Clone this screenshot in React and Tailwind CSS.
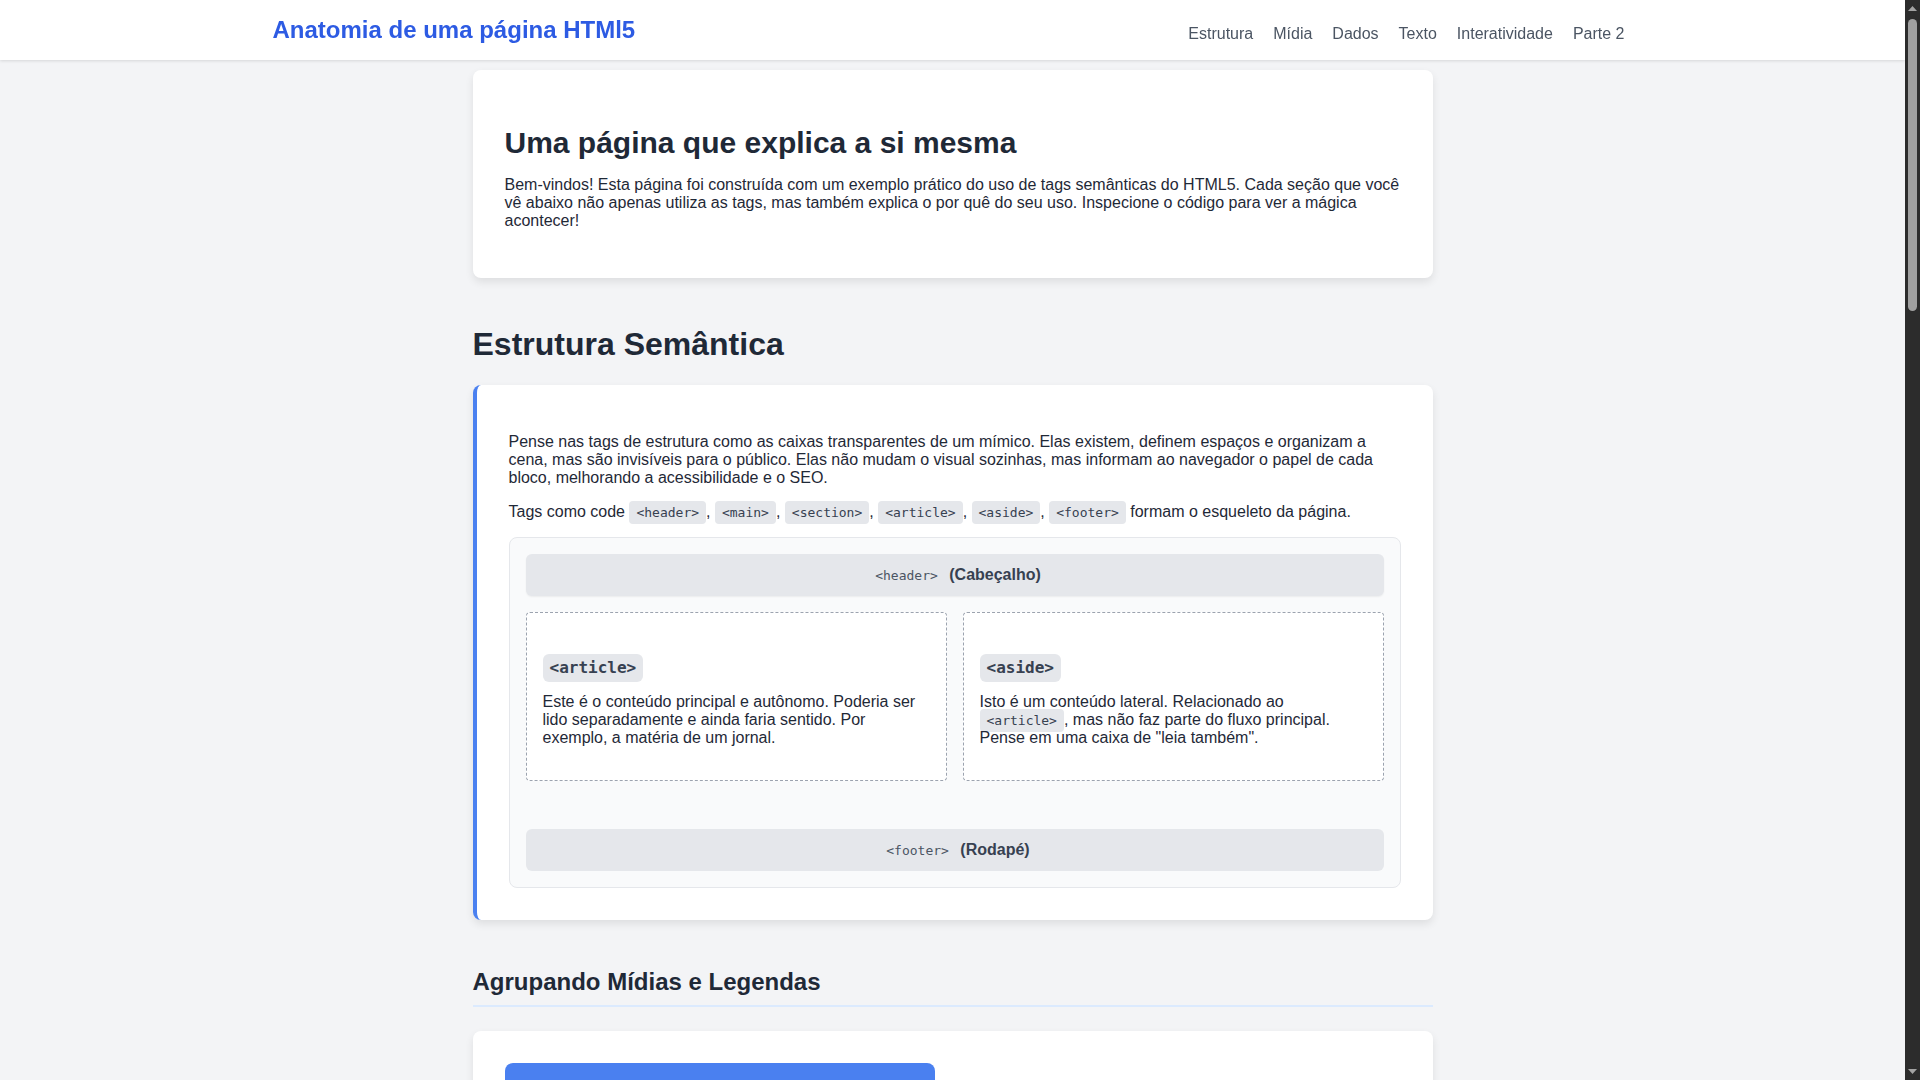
import React from 'react'

const navLinks = ['Estrutura', 'Mídia', 'Dados', 'Texto', 'Interatividade', 'Parte 2']

function Code({ children }) {
    return (
        <code className="rounded bg-[#e5e7eb] px-[7px] py-1 font-['DejaVu_Sans_Mono',monospace] text-[13px] text-[#374151]">{children}</code>
    )
}

function TagBadge({ children }) {
    return (
        <span className="inline-block rounded-md bg-[#e5e7eb] px-[7px] py-[5px] font-['DejaVu_Sans_Mono',monospace] text-[16px] font-bold leading-[18px] text-[#374151]">{children}</span>
    )
}

function SectionTitle({ children }) {
    return (
        <h2 className="mt-12 mb-6 border-b-2 border-[#dbeafe] pb-[9px] text-[24px] font-bold leading-[normal] text-[#1f2937]">{children}</h2>
    )
}

function Card({ children, accent }) {
    return (
        <div className={`rounded-lg bg-white p-8 shadow-[0_4px_8px_rgba(0,0,0,0.09)] ${accent ? 'border-l-4 border-[#4a80f0]' : ''}`}>
            {children}
        </div>
    )
}

// dark window scrollbar, as in the screenshot
function ScrollBar() {
    return (
        <div className="flex h-screen w-[15px] shrink-0 flex-col items-center bg-[#2c2c2c]">
            <div className="flex h-[17px] items-center justify-center">
                <svg width="9" height="5" viewBox="0 0 9 5"><path d="M4.5 0 9 5H0z" fill="#a3a3a3" /></svg>
            </div>
            <div className="mt-[2px] h-[292px] w-[9px] rounded-full bg-[#a0a0a0]"></div>
            <div className="flex-1"></div>
            <div className="flex h-[17px] items-center justify-center">
                <svg width="9" height="5" viewBox="0 0 9 5"><path d="M0 0h9L4.5 5z" fill="#a3a3a3" /></svg>
            </div>
        </div>
    )
}

export default function App() {
    return (
        <div className="flex h-screen bg-[#f3f4f6] font-['Liberation_Sans',Arial,sans-serif] text-[16px] leading-[normal] text-[#1f2937]">
            <div className="h-screen min-w-0 flex-1 overflow-y-auto [scrollbar-width:none]">
                <header className="sticky top-0 z-10 h-[60px] bg-white shadow-[0_1px_3px_rgba(0,0,0,0.12)]">
                    <div className="mx-auto flex max-w-[1400px] justify-between px-5">
                        <h1 className="pt-[16px] text-[24px] font-bold leading-[normal] text-[#2d5be3]">Anatomia de uma página HTMl5</h1>
                        <nav className="flex gap-5 pr-2 pt-[25px] text-[#4b5563]">
                            {navLinks.map((l) => (
                                <a key={l} href={`#${l}`} className="hover:text-[#2d5be3]">{l}</a>
                            ))}
                        </nav>
                    </div>
                </header>

                <main className="mx-auto max-w-[960px] pt-[10px] pb-20">
                    <Card>
                        <h2 className="mt-6 mb-4 text-[30px] font-bold leading-[normal] text-[#1f2937]">Uma página que explica a si mesma</h2>
                        <p className="mb-4">Bem-vindos! Esta página foi construída com um exemplo prático do uso de tags semânticas do HTML5. Cada seção que você vê abaixo não apenas utiliza as tags, mas também explica o por quê do seu uso. Inspecione o código para ver a mágica acontecer!</p>
                    </Card>

                    <section id="Estrutura" className="mt-12">
                        <h2 className="mb-[22px] text-[32px] font-bold leading-[normal] text-[#1f2937]">Estrutura Semântica</h2>
                        <Card accent>
                            <p className="my-4">Pense nas tags de estrutura como as caixas transparentes de um mímico. Elas existem, definem espaços e organizam a cena, mas são invisíveis para o público. Elas não mudam o visual sozinhas, mas informam ao navegador o papel de cada bloco, melhorando a acessibilidade e o SEO.</p>
                            <p className="mb-4">
                                Tags como code <Code>&lt;header&gt;</Code>, <Code>&lt;main&gt;</Code>, <Code>&lt;section&gt;</Code>, <Code>&lt;article&gt;</Code>, <Code>&lt;aside&gt;</Code>, <Code>&lt;footer&gt;</Code> formam o esqueleto da página.
                            </p>
                            <div className="rounded-lg border border-[#e5e7eb] bg-[#f9fafb] p-4">
                                <div className="rounded-md bg-[#e5e7eb] py-3 text-center font-bold text-[#374151] shadow-[0_1px_2px_rgba(0,0,0,0.06)]">
                                    <code className="px-[7px] font-['DejaVu_Sans_Mono',monospace] text-[13px] font-normal text-[#4b5563]">&lt;header&gt;</code> (Cabeçalho)
                                </div>
                                <div className="mt-4 grid grid-cols-2 gap-4">
                                    <article className="rounded border border-dashed border-[#9ca3af] bg-white px-4 pt-4 pb-[33px]">
                                        <div className="mt-[25px]"><TagBadge>&lt;article&gt;</TagBadge></div>
                                        <p className="mt-[11px]">Este é o conteúdo principal e autônomo. Poderia ser lido separadamente e ainda faria sentido. Por exemplo, a matéria de um jornal.</p>
                                    </article>
                                    <aside className="rounded border border-dashed border-[#9ca3af] bg-white px-4 pt-4 pb-[33px]">
                                        <div className="mt-[25px]"><TagBadge>&lt;aside&gt;</TagBadge></div>
                                        <p className="mt-[11px]">Isto é um conteúdo lateral. Relacionado ao <Code>&lt;article&gt;</Code>, mas não faz parte do fluxo principal. Pense em uma caixa de "leia também".</p>
                                    </aside>
                                </div>
                                <div className="mt-12 rounded-md bg-[#e5e7eb] py-3 text-center font-bold text-[#374151]">
                                    <code className="px-[7px] font-['DejaVu_Sans_Mono',monospace] text-[13px] font-normal text-[#4b5563]">&lt;footer&gt;</code> (Rodapé)
                                </div>
                            </div>
                        </Card>
                    </section>

                    <section id="Mídia">
                        <SectionTitle>Agrupando Mídias e Legendas</SectionTitle>
                        <Card>
                            <figure className="w-[430px]">
                                <div className="flex h-[260px] items-center justify-center rounded-t-lg bg-[#4a80f0] text-[20px] font-bold text-white">Imagem de exemplo</div>
                                <figcaption className="rounded-b-lg bg-[#f9fafb] px-3 py-2 text-[14px] text-[#4b5563]">
                                    <Code>&lt;figure&gt;</Code> agrupa a mídia e <Code>&lt;figcaption&gt;</Code> descreve o seu conteúdo.
                                </figcaption>
                            </figure>
                            <p className="mt-4">A tag figure é usada para conteúdo autocontido, como imagens, diagramas ou trechos de código, que são referenciados pelo texto principal.</p>
                        </Card>
                    </section>

                    <section id="Dados">
                        <SectionTitle>Apresentando Dados com Tabelas</SectionTitle>
                        <Card>
                            <p className="mb-4">Tabelas devem ser usadas para dados tabulares, nunca para montar o layout da página.</p>
                            <table className="w-full border-collapse text-left">
                                <thead>
                                    <tr className="bg-[#e5e7eb]">
                                        <th className="border border-[#d1d5db] px-3 py-2">Tag</th>
                                        <th className="border border-[#d1d5db] px-3 py-2">Função</th>
                                        <th className="border border-[#d1d5db] px-3 py-2">Exemplo</th>
                                    </tr>
                                </thead>
                                <tbody>
                                    {[
                                        ['<table>', 'Define a tabela', 'Planilha de notas'],
                                        ['<thead>', 'Agrupa o cabeçalho', 'Nomes das colunas'],
                                        ['<tbody>', 'Agrupa o corpo', 'Linhas de dados'],
                                        ['<tfoot>', 'Agrupa o rodapé', 'Totais'],
                                        ['<caption>', 'Título da tabela', 'Vendas de 2024'],
                                    ].map((r) => (
                                        <tr key={r[0]}>
                                            <td className="border border-[#d1d5db] px-3 py-2"><Code>{r[0]}</Code></td>
                                            <td className="border border-[#d1d5db] px-3 py-2">{r[1]}</td>
                                            <td className="border border-[#d1d5db] px-3 py-2">{r[2]}</td>
                                        </tr>
                                    ))}
                                </tbody>
                            </table>
                        </Card>
                    </section>

                    <section id="Texto">
                        <SectionTitle>Dando Significado ao Texto</SectionTitle>
                        <Card>
                            <p className="mb-4">Tags como <Code>&lt;strong&gt;</Code> e <Code>&lt;em&gt;</Code> indicam importância e ênfase, enquanto <Code>&lt;mark&gt;</Code> destaca um trecho relevante.</p>
                            <blockquote className="mb-4 border-l-4 border-[#d1d5db] pl-4 italic text-[#4b5563]">"A web é para todos, e a semântica é o que torna isso possível."</blockquote>
                            <p className="mb-4">Use <Code>&lt;abbr&gt;</Code> para abreviações, <Code>&lt;time&gt;</Code> para datas e <Code>&lt;address&gt;</Code> para informações de contato.</p>
                        </Card>
                    </section>

                    <section id="Interatividade">
                        <SectionTitle>Interatividade Nativa</SectionTitle>
                        <Card>
                            <details className="mb-4 rounded-md border border-[#e5e7eb] p-4">
                                <summary className="font-bold">O que é a tag details?</summary>
                            </details>
                            <details className="mb-4 rounded-md border border-[#e5e7eb] p-4">
                                <summary className="font-bold">E a tag dialog?</summary>
                            </details>
                        </Card>
                    </section>
                </main>

                <footer className="bg-[#1f2937] py-8 text-center text-[#d1d5db]">Anatomia de uma página HTMl5 — Parte 1</footer>
            </div>
            <ScrollBar />
        </div>
    )
}
